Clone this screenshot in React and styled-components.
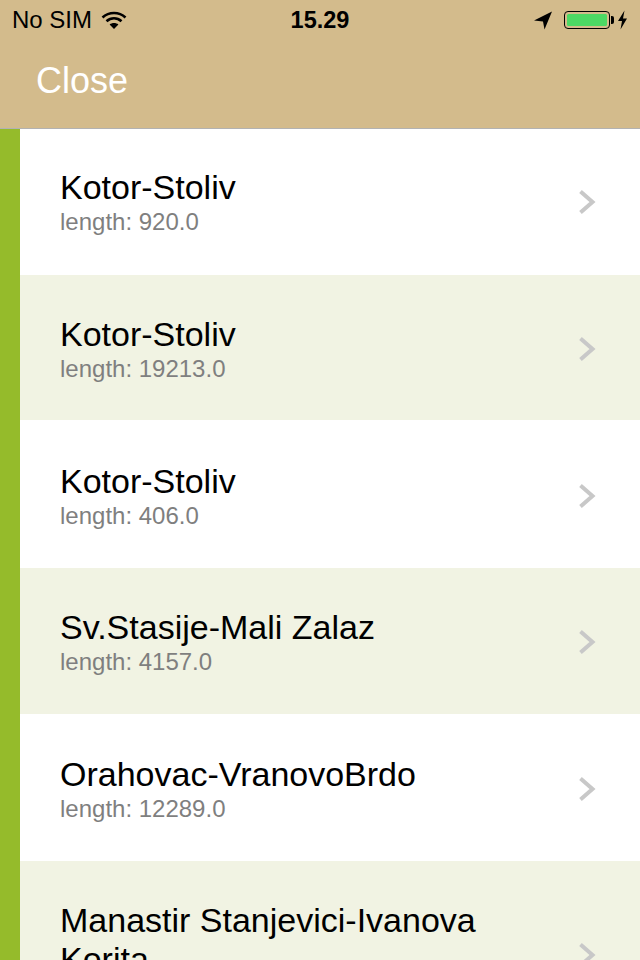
import styled, { createGlobalStyle } from 'styled-components';

const ROWS = [
  { name: 'Kotor-Stoliv', length: '920.0', height: 146, pad: 37 },
  { name: 'Kotor-Stoliv', length: '19213.0', height: 145, pad: 38 },
  { name: 'Kotor-Stoliv', length: '406.0', height: 148, pad: 40 },
  { name: 'Sv.Stasije-Mali Zalaz', length: '4157.0', height: 146, pad: 38 },
  { name: 'Orahovac-VranovoBrdo', length: '12289.0', height: 147, pad: 39 },
  { name: 'Manastir Stanjevici-Ivanova Korita', height: 186, pad: 38 },
];

function App() {
  return (
    <Screen>
      <GlobalStyle />
      <Header>
        <StatusBar>
          <StatusLeft>
            <span>No SIM</span>
            <svg width="26" height="20" viewBox="0 0 26 20">
              <path d="M1.5 7.5C8 1.5 18 1.5 24.5 7.5" fill="none" stroke="#000" strokeWidth="2.6" />
              <path d="M5.5 11.2C10 7.2 16 7.2 20.5 11.2" fill="none" stroke="#000" strokeWidth="2.6" />
              <path d="M13 19L8.6 14.6C11 12.6 15 12.6 17.4 14.6Z" fill="#000" />
            </svg>
          </StatusLeft>
          <Clock>15.29</Clock>
          <StatusRight>
            <svg width="20" height="20" viewBox="0 0 20 20">
              <path d="M1 10.5L19 1.5L11.5 19.5L10 11.5Z" fill="#000" />
            </svg>
            <Battery>
              <BatteryFill />
            </Battery>
            <BatteryCap />
            <svg width="11" height="20" viewBox="0 0 11 20">
              <path d="M7.5 0.5L1 11H5L3.5 19.5L10 8.5H6Z" fill="#000" />
            </svg>
          </StatusRight>
        </StatusBar>
        <NavBar>
          <CloseButton>Close</CloseButton>
        </NavBar>
      </Header>
      <Body>
        <SideStripe />
        <List>
          {ROWS.map((row, i) => (
            <Row key={i} $alt={i % 2 === 1} $height={row.height} $pad={row.pad}>
              <RowInner>
                <RowText>
                  <Name>{row.name}</Name>
                  <Length>{row.length && `length: ${row.length}`}</Length>
                </RowText>
                <svg width="18" height="26" viewBox="0 0 18 26">
                  <path d="M2.5 2.5L14.5 13L2.5 23.5" fill="none" stroke="#c8c8c8" strokeWidth="4" />
                </svg>
              </RowInner>
            </Row>
          ))}
        </List>
      </Body>
    </Screen>
  );
}

const GlobalStyle = createGlobalStyle`
  html, body {
    margin: 0;
    padding: 0;
    overflow: hidden;
  }
`;

const Screen = styled.div`
  width: 640px;
  height: 960px;
  overflow: hidden;
  display: flex;
  flex-direction: column;
  background: #fff;
  font-family: "Liberation Sans", Arial, sans-serif;
`;

const Header = styled.header`
  height: 129px;
  flex-shrink: 0;
  box-sizing: border-box;
  background: #d3bb8c;
  border-bottom: 1px solid #b2b2b2;
`;

const StatusBar = styled.div`
  height: 40px;
  padding: 0 12px;
  display: grid;
  grid-template-columns: 1fr auto 1fr;
  align-items: center;
  font-size: 24px;
  color: #000;
`;

const StatusLeft = styled.div`
  display: flex;
  align-items: center;
  gap: 9px;
`;

const Clock = styled.div`
  font-size: 23.5px;
  font-weight: 700;
`;

const StatusRight = styled.div`
  display: flex;
  align-items: center;
  justify-content: flex-end;
`;

const Battery = styled.div`
  width: 46px;
  height: 18px;
  box-sizing: border-box;
  margin-left: 11px;
  padding: 2px;
  border: 1.5px solid #000;
  border-radius: 4px;
`;

const BatteryFill = styled.div`
  height: 100%;
  background: #4cd964;
  border-radius: 1.5px;
`;

const BatteryCap = styled.div`
  width: 3px;
  height: 8px;
  margin: 0 3px 0 1px;
  background: #000;
  border-radius: 0 2px 2px 0;
`;

const NavBar = styled.div`
  height: 80px;
  box-sizing: border-box;
  padding: 2px 0 0 36px;
  display: flex;
  align-items: center;
`;

const CloseButton = styled.div`
  font-size: 36px;
  color: #fff;
`;

const Body = styled.div`
  flex: 1;
  display: flex;
  min-height: 0;
`;

const SideStripe = styled.div`
  width: 20px;
  flex-shrink: 0;
  background: #95bb2b;
`;

const List = styled.div`
  flex: 1;
  min-width: 0;
`;

const Row = styled.div`
  height: ${(p) => p.$height}px;
  box-sizing: border-box;
  padding: ${(p) => p.$pad}px 44px 0 40px;
  background: ${(p) => (p.$alt ? '#f1f3e3' : '#fff')};
`;

const RowInner = styled.div`
  display: flex;
  align-items: center;
  justify-content: space-between;
`;

const RowText = styled.div`
  width: 440px;
  padding-top: 2px;
  margin-bottom: 2px;
`;

const Name = styled.div`
  font-size: 34px;
  line-height: 39px;
  color: #000;
`;

const Length = styled.div`
  min-height: 28px;
  margin-top: 1px;
  font-size: 24px;
  line-height: 28px;
  color: #7f7f7f;
`;

export default App;
